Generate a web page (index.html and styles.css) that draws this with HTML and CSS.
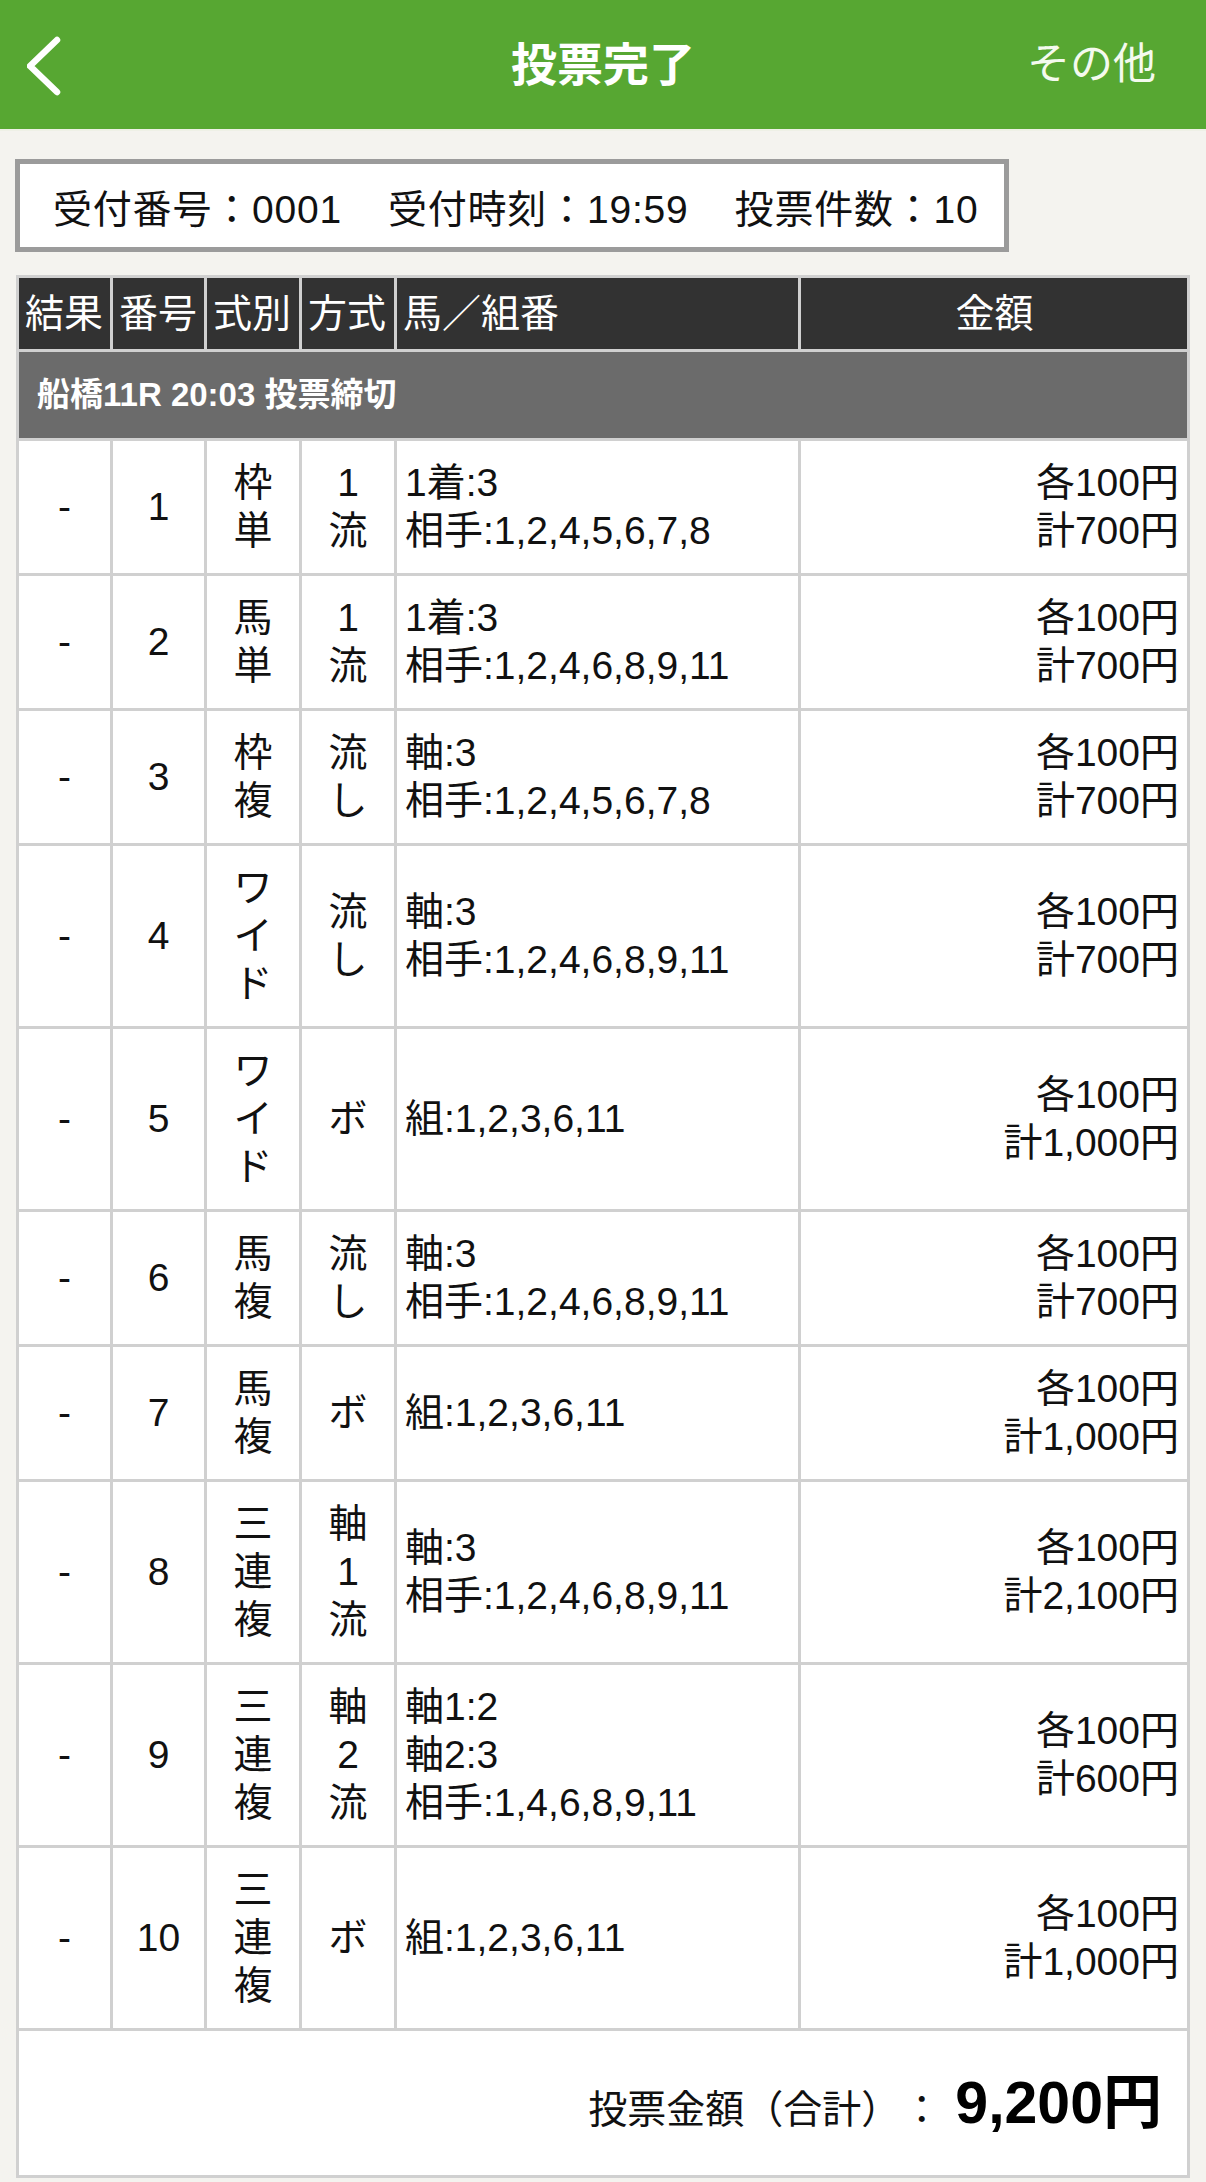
FILE: index.html
```html
<!DOCTYPE html>
<html lang="ja">
<head>
<meta charset="utf-8">
<title>投票完了</title>
<link rel="stylesheet" href="styles.css">
</head>
<body>
<header class="nav">
  <div class="nav-left">
    <svg class="back" width="40" height="64" viewBox="0 0 40 64" aria-hidden="true">
      <polyline points="30,7 3,33 30,59" fill="none" stroke="#fff" stroke-width="6.5" stroke-linecap="round" stroke-linejoin="round"/>
    </svg>
  </div>
  <h1 class="nav-title">投票完了</h1>
  <div class="nav-right">その他</div>
</header>

<main class="content">
  <div class="info">
    <span class="info-item">受付番号：0001</span>
    <span class="info-item">受付時刻：19:59</span>
    <span class="info-item">投票件数：10</span>
  </div>

  <table class="bets">
    <colgroup>
      <col class="c-res"><col class="c-no"><col class="c-type"><col class="c-method"><col class="c-horse"><col class="c-amt">
    </colgroup>
    <thead>
      <tr class="head">
        <th>結果</th><th>番号</th><th>式別</th><th>方式</th><th>馬／組番</th><th class="center">金額</th>
      </tr>
    </thead>
    <tbody>
      <tr class="race"><td colspan="6">船橋11R 20:03 投票締切</td></tr>
      <tr>
        <td class="center">-</td><td class="center">1</td><td class="center">枠<br>単</td><td class="center">1<br>流</td>
        <td>1着:3<br>相手:1,2,4,5,6,7,8</td><td class="right">各100円<br>計700円</td>
      </tr>
      <tr>
        <td class="center">-</td><td class="center">2</td><td class="center">馬<br>単</td><td class="center">1<br>流</td>
        <td>1着:3<br>相手:1,2,4,6,8,9,11</td><td class="right">各100円<br>計700円</td>
      </tr>
      <tr>
        <td class="center">-</td><td class="center">3</td><td class="center">枠<br>複</td><td class="center">流<br>し</td>
        <td>軸:3<br>相手:1,2,4,5,6,7,8</td><td class="right">各100円<br>計700円</td>
      </tr>
      <tr>
        <td class="center">-</td><td class="center">4</td><td class="center">ワ<br>イ<br>ド</td><td class="center">流<br>し</td>
        <td>軸:3<br>相手:1,2,4,6,8,9,11</td><td class="right">各100円<br>計700円</td>
      </tr>
      <tr>
        <td class="center">-</td><td class="center">5</td><td class="center">ワ<br>イ<br>ド</td><td class="center">ボ</td>
        <td>組:1,2,3,6,11</td><td class="right">各100円<br>計1,000円</td>
      </tr>
      <tr>
        <td class="center">-</td><td class="center">6</td><td class="center">馬<br>複</td><td class="center">流<br>し</td>
        <td>軸:3<br>相手:1,2,4,6,8,9,11</td><td class="right">各100円<br>計700円</td>
      </tr>
      <tr>
        <td class="center">-</td><td class="center">7</td><td class="center">馬<br>複</td><td class="center">ボ</td>
        <td>組:1,2,3,6,11</td><td class="right">各100円<br>計1,000円</td>
      </tr>
      <tr>
        <td class="center">-</td><td class="center">8</td><td class="center">三<br>連<br>複</td><td class="center">軸<br>1<br>流</td>
        <td>軸:3<br>相手:1,2,4,6,8,9,11</td><td class="right">各100円<br>計2,100円</td>
      </tr>
      <tr>
        <td class="center">-</td><td class="center">9</td><td class="center">三<br>連<br>複</td><td class="center">軸<br>2<br>流</td>
        <td>軸1:2<br>軸2:3<br>相手:1,4,6,8,9,11</td><td class="right">各100円<br>計600円</td>
      </tr>
      <tr>
        <td class="center">-</td><td class="center">10</td><td class="center">三<br>連<br>複</td><td class="center">ボ</td>
        <td>組:1,2,3,6,11</td><td class="right">各100円<br>計1,000円</td>
      </tr>
    </tbody>
  </table>

  <div class="total">
    <span class="total-label">投票金額（合計）</span>
    <span class="total-colon">：</span>
    <span class="total-value">9,200円</span>
  </div>
</main>
</body>
</html>
```

FILE: styles.css
```css
* {
  box-sizing: border-box;
}

html, body {
  margin: 0;
  padding: 0;
}

body {
  width: 1206px;
  background: #f4f3ef;
  font-family: "Liberation Sans", "Noto Sans CJK JP", sans-serif;
  color: #111;
}

.nav {
  height: 131px;
  background: #57a732;
  display: grid;
  grid-template-columns: 1fr auto 1fr;
  align-items: center;
  border-bottom: 2px solid #eef0e6;
}

.nav-left {
  padding-left: 27px;
  display: flex;
  align-items: center;
}

.back {
  display: block;
}

.nav-title {
  margin: 0;
  font-size: 46px;
  font-weight: bold;
  color: #fff;
  line-height: 1;
}

.nav-right {
  justify-self: end;
  padding-right: 50px;
  font-size: 43px;
  color: #f4faee;
  line-height: 1;
}

.content {
  padding: 28px 16px 0 15px;
}

.info {
  width: 994px;
  height: 93px;
  background: #fff;
  border: 5px solid #9b9b9b;
  display: flex;
  align-items: center;
  gap: 46px;
  padding-left: 33px;
  font-size: 39px;
  color: #111;
  white-space: nowrap;
}

.info-item {
  letter-spacing: 0.8px;
}

.bets {
  margin-top: 23px;
  margin-left: 1px;
  width: 1174px;
  table-layout: fixed;
  border-collapse: collapse;
  background: #fff;
  font-size: 39px;
  line-height: 48px;
}

.c-res { width: 94px; }
.c-no { width: 94px; }
.c-type { width: 95px; }
.c-method { width: 95px; }
.c-horse { width: 404px; }
.c-amt { width: 389px; }

.bets th,
.bets td {
  border: 3px solid #d0d0d0;
  padding: 18px 8px 18px 8px;
  vertical-align: middle;
  text-align: left;
  font-weight: normal;
  white-space: nowrap;
}

.bets .head th {
  background: #323232;
  color: #fff;
  padding: 12px 5px 11px 6px;
}

.bets .head th.center {
  text-align: center;
}

.bets .race td {
  background: #6b6b6b;
  color: #fff;
  font-weight: bold;
  font-size: 33px;
  padding: 19px 8px 19px 18px;
}

.bets td.center {
  text-align: center;
  padding-left: 4px;
  padding-right: 4px;
}

.bets td.right {
  text-align: right;
  padding-right: 8px;
}

.total {
  margin-left: 1px;
  width: 1174px;
  height: 147px;
  background: #fff;
  border: 3px solid #d0d0d0;
  border-top: none;
  display: flex;
  justify-content: flex-end;
  align-items: baseline;
  padding: 42px 25px 0 0;
}

.total-label {
  font-size: 39px;
  line-height: 60px;
  margin-right: 2px;
}

.total-colon {
  font-size: 39px;
  line-height: 60px;
  margin-right: 14px;
}

.total-value {
  font-size: 59px;
  font-weight: bold;
  line-height: 60px;
  color: #000;
}
```
